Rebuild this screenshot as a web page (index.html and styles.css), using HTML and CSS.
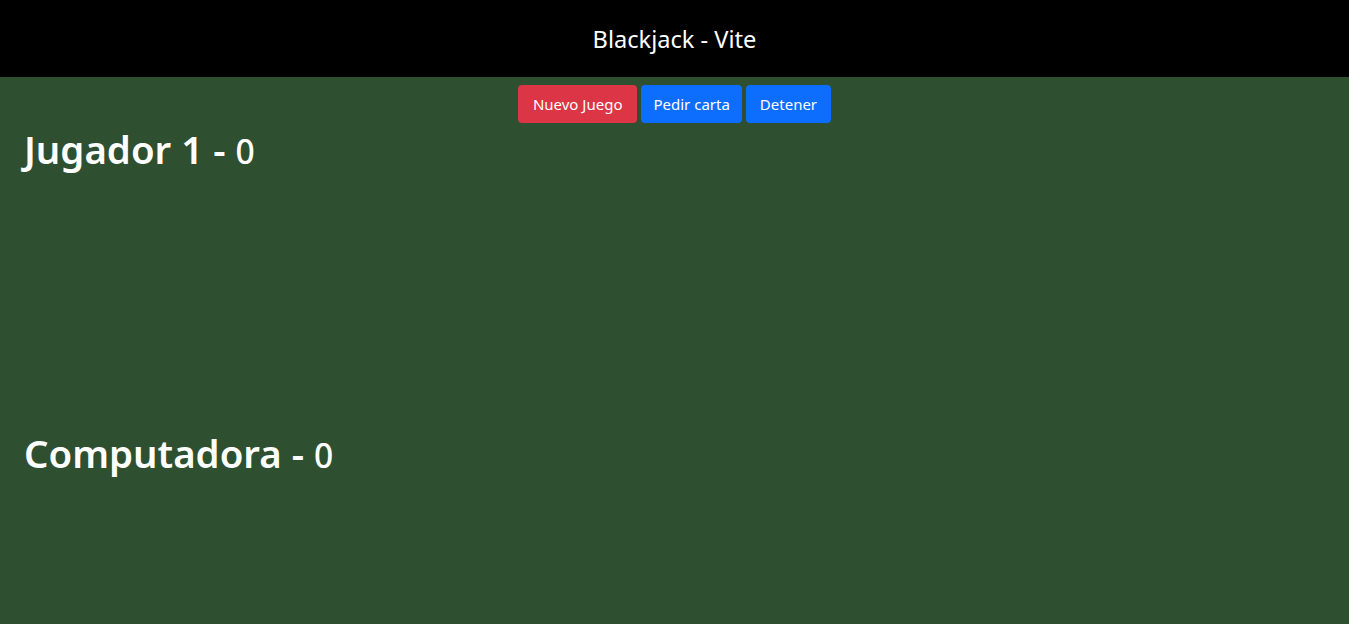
FILE: index.html
```html
<!DOCTYPE html>
<html lang="es">
<head>
<meta charset="utf-8">
<title>Blackjack - Vite</title>
<link rel="stylesheet" href="styles.css">
</head>
<body>
  <header class="topbar">
    <h1 class="title">Blackjack - Vite</h1>
  </header>
  <div class="controls">
    <button class="btn btn-danger">Nuevo Juego</button>
    <button class="btn btn-primary btn-hit">Pedir carta</button>
    <button class="btn btn-primary btn-stop">Detener</button>
  </div>
  <main class="table">
    <section class="player">
      <h2 class="player-name">Jugador 1 - <small class="score">0</small></h2>
      <div class="cards"></div>
    </section>
    <section class="player">
      <h2 class="player-name">Computadora - <small class="score">0</small></h2>
      <div class="cards cards-last"></div>
    </section>
  </main>
</body>
</html>
```
FILE: styles.css
```css
* { box-sizing: border-box; }
html, body { margin: 0; padding: 0; }
body {
  background: #2f4f31;
  color: #fff;
  font-family: "Noto Sans", "Open Sans", sans-serif;
  min-height: 624px;
}
.topbar {
  background: #000;
  height: 77px;
  display: flex;
  align-items: center;
  justify-content: center;
}
.title {
  margin: 0;
  font-size: 23.6px;
  font-weight: 400;
  color: #fff;
}
.controls {
  display: flex;
  justify-content: center;
  gap: 4px;
  padding-top: 8px;
}
.btn {
  font-family: inherit;
  font-size: 15px;
  line-height: 24px;
  padding: 7px 13px;
  border: none;
  border-radius: 4px;
  color: #fff;
}
.btn-danger { background: #dc3545; padding: 7px 15px; }
.btn-primary { background: #0d6efd; }
.btn-hit { padding: 7px 12px; }
.btn-stop { padding: 7px 14px; }
.table {
  padding: 2px 24px 0;
}
.player-name {
  margin: 0 0 8px;
  font-size: 38.4px;
  font-weight: 600;
  line-height: 48px;
}
.score {
  font-size: 0.875em;
  font-weight: 500;
}
.cards {
  height: 246px;
}
.cards-last {
  height: 100px;
}
```
